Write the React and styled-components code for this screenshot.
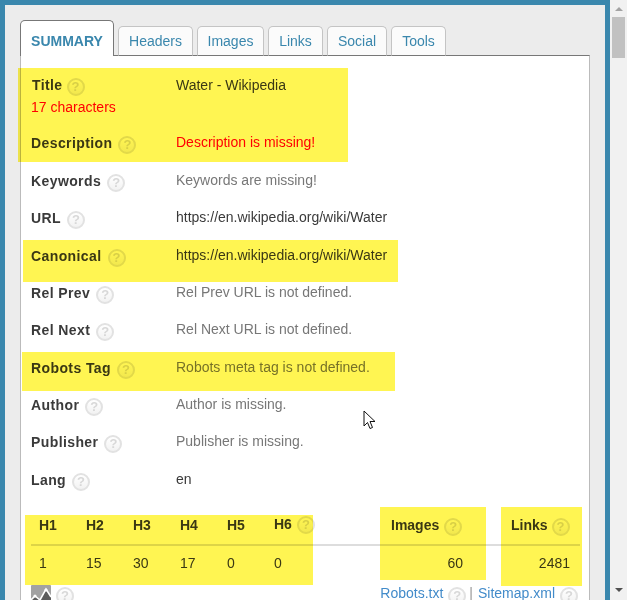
import React from 'react';
import styled, { createGlobalStyle } from 'styled-components';

const Global = createGlobalStyle`
  html, body { margin: 0; padding: 0; height: 600px; overflow: hidden; background: #fff; }
  #root { height: 600px; }
`;
const Page = styled.div`
  display: flex; width: 627px; height: 600px; overflow: hidden;
  font-family: "Liberation Sans", Arial, sans-serif; font-size: 14px; line-height: 20px; color: #3a3a3a;
`;
const Frame = styled.div`
  position: relative; box-sizing: border-box; width: 610px; height: 600px; overflow: hidden;
  border: 5px solid #3a87ad; border-bottom: 0; background: #ececec; padding: 16px 16px 0 15px;
`;
const Scrollbar = styled.div`
  display: flex; flex-direction: column; align-items: center; justify-content: space-between;
  width: 17px; height: 600px; background: #f1f1f1; position: relative;
`;
const Thumb = styled.div`
  position: absolute; top: 17px; left: 2px; width: 13px; height: 41px; background: #c1c1c1;
`;
const Arrow = styled.div`
  width: 0; height: 0; border-left: 4px solid transparent; border-right: 4px solid transparent;
  ${p => p.$down
    ? 'margin-bottom: 8px; border-top: 4px solid #505050;'
    : 'margin-top: 7px; border-bottom: 4px solid #a3a3a3;'}
`;
const Tabs = styled.div`
  display: flex; align-items: flex-end; gap: 4px; height: 35px; position: relative; z-index: 1; margin-bottom: -1px;
`;
const Tab = styled.div`
  box-sizing: border-box; width: ${p => p.$w}px; height: 30px; text-align: center; line-height: 28px;
  background: #fbfbfb; border: 1px solid #c4c4c4; border-bottom-color: #777; border-radius: 5px 5px 0 0; color: #3a87ad;
`;
const ActiveTab = styled(Tab)`
  height: 36px; line-height: 40px; background: #fff; border-color: #777; border-bottom: 0; font-weight: bold; color: #3a87ad;
`;
const Panel = styled.div`
  box-sizing: border-box; width: 570px; height: 560px; background: #fff;
  border: 1px solid #bbb; border-top-color: #777; padding: 19px 9px 0 10px;
`;
const Row = styled.div`
  display: grid; grid-template-columns: 145px 1fr; height: ${p => p.$h || 37.33}px;
`;
const Label = styled.div`
  display: flex; align-items: flex-start; font-weight: bold; letter-spacing: .4px;
  padding-left: ${p => p.$pl || 0}px;
`;
const Hint = styled.div` color: #f00; margin-top: 1px; `;
const Value = styled.div`
  margin-top: ${p => p.$first ? 0 : -1}px;
  color: ${p => p.$tone === 'red' ? '#f00' : p.$tone === 'muted' ? '#777' : '#3a3a3a'};
`;
const Help = styled.span`
  box-sizing: border-box; display: inline-flex; align-items: center; justify-content: center; flex: none;
  width: 18px; height: 18px; margin: ${p => p.$mt ?? 3}px 0 0 ${p => p.$ml ?? 6}px; border-radius: 50%;
  border: 2px solid #e2e2e2; background: linear-gradient(#fff, #f2f2f2); color: #d8d8d8;
  font-size: 13px; line-height: 14px; font-weight: bold; letter-spacing: 0;
`;
const Stats = styled.div`
  display: grid; grid-template-columns: repeat(6, 47px) 70px 72px 48px 59px 9px; padding-left: 8px;
`;
const HeadRow = styled(Stats)`
  padding-top: 8px; padding-bottom: 8px; border-bottom: 2px solid #ddd; font-weight: bold;
`;
const ValueRow = styled(Stats)` padding-top: 7px; `;
const HeadCell = styled.div`
  display: flex; grid-column: ${p => p.$col || 'auto'}; white-space: nowrap; margin-top: ${p => p.$up || 0}px;
`;
const NumCell = styled.div`
  grid-column: ${p => p.$col || 'auto'}; text-align: ${p => p.$col ? 'right' : 'left'};
`;
const Footer = styled.div` display: flex; align-items: flex-start; justify-content: space-between; margin-top: 12px; padding-right: 2px; `;
const Side = styled.div`
  display: flex; align-items: flex-start; margin-top: ${p => p.$up ? -2 : 0}px;
`;
const FootLink = styled.a` color: #428bca; text-decoration: none; `;
const Sep = styled.span` color: #999; margin: 0 5px 0 3px; `;
const Overlay = styled.div`
  position: absolute; z-index: 2; pointer-events: none; background: #fff552; mix-blend-mode: multiply;
`;
const Cursor = styled.svg` position: absolute; z-index: 3; left: 358px; top: 405px; `;

const rows = [
  ['Keywords', 'Keywords are missing!', 'muted'],
  ['URL', 'https://en.wikipedia.org/wiki/Water'],
  ['Canonical', 'https://en.wikipedia.org/wiki/Water'],
  ['Rel Prev', 'Rel Prev URL is not defined.', 'muted'],
  ['Rel Next', 'Rel Next URL is not defined.', 'muted'],
  ['Robots Tag', 'Robots meta tag is not defined.', 'muted'],
  ['Author', 'Author is missing.', 'muted'],
  ['Publisher', 'Publisher is missing.', 'muted'],
  ['Lang', 'en'],
];
const overlays = [
  [13, 63, 330, 94], [18, 235, 375, 42], [17, 347, 373, 39],
  [20, 510, 288, 70], [375, 502, 106, 73], [496, 502, 81, 79],
];
const ChartIcon = () => (
  <svg width="20" height="20" viewBox="0 0 20 20">
    <rect width="20" height="20" rx="1" fill="#a2a2a2" />
    <path d="M0 20v-5l4-4 5 4 6-11 5 8v8z" fill="#5c5c5c" />
    <path d="M0 15l4-4 5 4 6-11 5 8" fill="none" stroke="#fff" strokeWidth="1.6" />
    <circle cx="4" cy="11" r="1.6" fill="#fff" />
    <circle cx="15" cy="5" r="1.6" fill="#fff" />
  </svg>
);

export default function App() {
  return (
    <Page>
      <Global />
      <Frame>
        <Tabs>
          <ActiveTab $w={94}>SUMMARY</ActiveTab>
          <Tab $w={75}>Headers</Tab>
          <Tab $w={67}>Images</Tab>
          <Tab $w={55}>Links</Tab>
          <Tab $w={60}>Social</Tab>
          <Tab $w={55}>Tools</Tab>
        </Tabs>
        <Panel>
          <Row $h={58}>
            <div>
              <Label $pl={1}>Title<Help $ml={4}>?</Help></Label>
              <Hint>17 characters</Hint>
            </div>
            <Value $first>Water - Wikipedia</Value>
          </Row>
          <Row $h={38}>
            <Label>Description<Help>?</Help></Label>
            <Value $tone="red">Description is missing!</Value>
          </Row>
          {rows.map(([label, value, tone]) => (
            <Row key={label}>
              <Label>{label}<Help>?</Help></Label>
              <Value $tone={tone}>{value}</Value>
            </Row>
          ))}
          <HeadRow>
            {['H1', 'H2', 'H3', 'H4', 'H5'].map(h => <HeadCell key={h}>{h}</HeadCell>)}
            <HeadCell $up={-1}>H6<Help $ml={5} $mt={2}>?</Help></HeadCell>
            <HeadCell $col={8}>Images<Help $ml={5}>?</Help></HeadCell>
            <HeadCell $col={10}>Links<Help $ml={4}>?</Help></HeadCell>
          </HeadRow>
          <ValueRow>
            {[1, 15, 30, 17, 0, 0].map((n, i) => <NumCell key={i}>{n}</NumCell>)}
            <NumCell $col={8}>60</NumCell>
            <NumCell $col={10}>2481</NumCell>
          </ValueRow>
          <Footer>
            <Side><ChartIcon /><Help $ml={5} $mt={2}>?</Help></Side>
            <Side $up>
              <FootLink>Robots.txt</FootLink><Help $ml={5} $mt={4}>?</Help><Sep>|</Sep>
              <FootLink>Sitemap.xml</FootLink><Help $ml={5} $mt={4}>?</Help>
            </Side>
          </Footer>
        </Panel>
        {overlays.map(([l, t, w, h]) => <Overlay key={l} style={{ left: l, top: t, width: w, height: h }} />)}
        <Cursor width="14" height="20" viewBox="0 0 14 20">
          <path d="M1 1v15l3.5-3.5 2.5 6 2.5-1-2.5-6h5z" fill="#fff" stroke="#111" strokeWidth="1" />
        </Cursor>
      </Frame>
      <Scrollbar>
        <Arrow />
        <Thumb />
        <Arrow $down />
      </Scrollbar>
    </Page>
  );
}
